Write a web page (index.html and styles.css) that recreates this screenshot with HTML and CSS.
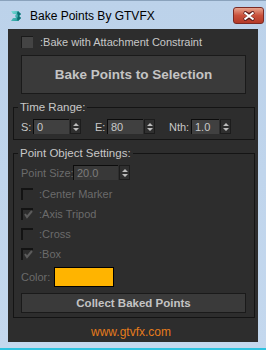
FILE: index.html
```html
<!DOCTYPE html>
<html lang="en">
<head>
  <meta charset="UTF-8">
  <meta name="viewport" content="width=device-width, initial-scale=1.0">
  <title>Bake Points By GTVFX</title>
  <link rel="stylesheet" href="styles.css">
</head>
<body>
  <div class="window">
    <div class="titlebar">
      <svg class="app-icon" width="12" height="12" viewBox="0 0 12 12">
        <defs>
          <linearGradient id="teal" x1="0" y1="0" x2="1" y2="1">
            <stop offset="0" stop-color="#7fe0dc"/>
            <stop offset="1" stop-color="#0f8a8c"/>
          </linearGradient>
        </defs>
        <path d="M1 1 L8 1 L11 4 L9 6 L11 8 L8 11 L1 11 L3 8 L6 8 L5 6 L6 4 L3 4 Z" fill="url(#teal)"/>
        <path d="M8 1 L11 4 L9 6 L11 8 L8 11 L7 9 L8 6 L7 3 Z" fill="#0b6f72"/>
      </svg>
      <span class="title">Bake Points By GTVFX</span>
      <div class="close">
        <svg width="14" height="10" viewBox="0 0 14 10">
          <path d="M2 1 L7 4 L12 1 M2 9 L7 6 L12 9" stroke="#5a1a1a" stroke-width="3.6" fill="none"/>
          <path d="M2.5 1.5 L11.5 8.5 M11.5 1.5 L2.5 8.5" stroke="#fff" stroke-width="2.2"/>
        </svg>
      </div>
    </div>

    <div class="client">
      <label class="check">
        <span class="box"></span>
        <span>:Bake with Attachment Constraint</span>
      </label>

      <button class="btn btn-big">Bake Points to Selection</button>

      <fieldset class="group group-time">
        <legend>Time Range:</legend>
        <div class="spin-row">
          <span class="lbl lbl-s">S:</span>
          <span class="spinner">
            <span class="field field-s">0</span>
            <span class="arrows"><svg width="6" height="12" viewBox="0 0 6 12"><path d="M3 2 L6 5 L0 5 Z M0 7 L6 7 L3 10 Z" fill="#bdbdbd"/></svg></span>
          </span>
          <span class="lbl lbl-e">E:</span>
          <span class="spinner">
            <span class="field field-e">80</span>
            <span class="arrows"><svg width="6" height="12" viewBox="0 0 6 12"><path d="M3 2 L6 5 L0 5 Z M0 7 L6 7 L3 10 Z" fill="#bdbdbd"/></svg></span>
          </span>
          <span class="lbl lbl-nth">Nth:</span>
          <span class="spinner">
            <span class="field field-nth">1.0</span>
            <span class="arrows"><svg width="6" height="12" viewBox="0 0 6 12"><path d="M3 2 L6 5 L0 5 Z M0 7 L6 7 L3 10 Z" fill="#bdbdbd"/></svg></span>
          </span>
        </div>
      </fieldset>

      <fieldset class="group group-point">
        <legend>Point Object Settings:</legend>
        <div class="spin-row">
          <span class="lbl lbl-size disabled">Point Size:</span>
          <span class="spinner">
            <span class="field field-size disabled">20.0</span>
            <span class="arrows"><svg width="6" height="12" viewBox="0 0 6 12"><path d="M3 2 L6 5 L0 5 Z M0 7 L6 7 L3 10 Z" fill="#bdbdbd"/></svg></span>
          </span>
        </div>

        <label class="check check-off">
          <span class="box"></span>
          <span>:Center Marker</span>
        </label>
        <label class="check check-off">
          <span class="box"><svg width="10" height="10" viewBox="0 0 10 10"><path d="M2 4 L4 7 L9 1" stroke="#5c5c5c" stroke-width="2" fill="none"/></svg></span>
          <span>:Axis Tripod</span>
        </label>
        <label class="check check-off">
          <span class="box"></span>
          <span>:Cross</span>
        </label>
        <label class="check check-off">
          <span class="box"><svg width="10" height="10" viewBox="0 0 10 10"><path d="M2 4 L4 7 L9 1" stroke="#5c5c5c" stroke-width="2" fill="none"/></svg></span>
          <span>:Box</span>
        </label>

        <div class="color-row">
          <span class="lbl disabled">Color:</span>
          <span class="swatch" style="background-color: #ffb400;"></span>
        </div>

        <button class="btn btn-collect">Collect Baked Points</button>
      </fieldset>

      <div class="site">www.gtvfx.com</div>
    </div>
  </div>
</body>
</html>
```

FILE: styles.css
```css
body { margin: 0; font-family: "Liberation Sans", Arial, sans-serif; }

.window { width: 266px; height: 350px; box-sizing: border-box; padding: 0 8px 8px 8px; background: linear-gradient(#bcd2ea, #c4d8ee); border-top: 1px solid #8aa2bc; border-bottom: 2px solid #2ec3e0; }
.titlebar { height: 28px; display: flex; align-items: center; }
.app-icon { margin: 2px 0 0 2px; }
.title { margin-left: 8px; font-size: 12px; color: #000; padding-top: 2px; }
.close { margin-left: auto; margin-right: -6px; margin-top: 1px; width: 31px; height: 17px; box-sizing: border-box; border: 1px solid #7a2a24; border-radius: 3px; background: linear-gradient(#e8a48e, #c9513c 50%, #b43a28); display: flex; align-items: center; justify-content: center; }

.client { height: 313px; background: #2d2d2d; color: #c8c8c8; font-size: 11px; display: flex; flex-direction: column; padding-top: 7px; box-sizing: border-box; }

.check { display: flex; align-items: center; height: 12px; margin-left: 13px; line-height: 12px; }
.check .box { width: 12px; height: 12px; flex-shrink: 0; box-sizing: border-box; background: #444; border-top: 1px solid #1a1a1a; border-left: 1px solid #1a1a1a; margin-right: 7px; display: flex; align-items: center; justify-content: center; }
.check-off { margin-left: 0; margin-top: 8px; color: #6b6b6b; }
.check-off .box { background: none; border-top: 2px solid #131313; border-left: 2px solid #131313; margin-right: 6px; }

.btn { font-family: "Liberation Sans", Arial, sans-serif; font-weight: bold; color: #c4c4c4; background: #3a3a3a; border: 1px solid #1a1a1a; padding: 0; }
.btn-big { margin: 7px 0 0 13px; width: 225px; height: 39px; font-size: 13.5px; }
.btn-collect { width: 225px; height: 20px; font-size: 11.5px; margin-top: 6px; }

.group { border: 1px solid #141414; margin: 6px 3px 0 5px; padding: 0 6px 5px 7px; min-width: 0; }
.group legend { padding: 0 2px; margin-left: -3px; line-height: 14px; font-size: 11.5px; color: #c8c8c8; }
.group-point { padding-bottom: 4px; }

.spin-row { display: flex; align-items: center; height: 15px; margin-top: 5px; }
.lbl { white-space: nowrap; flex-shrink: 0; }
.lbl-s, .lbl-e { width: 12px; }
.lbl-nth { width: 22px; }
.lbl-size { width: 52px; }
.spinner { display: flex; height: 15px; margin-right: 14px; }
.field { box-sizing: border-box; height: 15px; background: #404040; border-top: 1px solid #0c0c0c; border-left: 1px solid #0c0c0c; padding-left: 3px; line-height: 14px; }
.field-s, .field-e { width: 36px; }
.field-nth { width: 28px; }
.field-size { width: 45px; }
.arrows { width: 11px; height: 15px; box-sizing: border-box; margin-left: 1px; background: #2f2f2f; border: 1px solid #1c1c1c; display: flex; align-items: center; justify-content: center; }
.disabled { color: #6b6b6b; }
.field.disabled { color: #7c7c7c; background: #383838; }

.color-row { display: flex; align-items: center; margin-top: 7px; height: 20px; }
.color-row .lbl { width: 33px; }
.swatch { width: 60px; height: 20px; box-sizing: border-box; border: 1px solid #000; }

.site { text-align: center; color: #e57b1c; font-size: 12px; margin-top: 7px; padding-right: 4px; }
```
